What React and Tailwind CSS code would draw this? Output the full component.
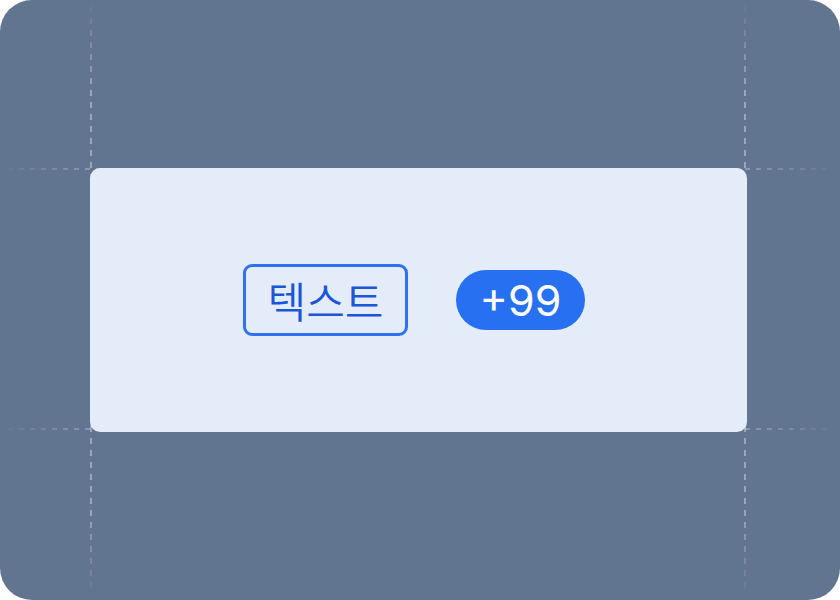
import React from "react";

function Guides() {
  return (
    <svg className="absolute left-0 top-0 pointer-events-none" width="840" height="600" viewBox="0 0 840 600">
      <defs>
        <linearGradient id="gh" gradientUnits="userSpaceOnUse" x1="0" y1="0" x2="840" y2="0">
          <stop offset="0" stopColor="#fff" stopOpacity="0" />
          <stop offset="0.15" stopColor="#fff" stopOpacity="0.36" />
          <stop offset="0.85" stopColor="#fff" stopOpacity="0.36" />
          <stop offset="1" stopColor="#fff" stopOpacity="0" />
        </linearGradient>
        <linearGradient id="gv" gradientUnits="userSpaceOnUse" x1="0" y1="0" x2="0" y2="600">
          <stop offset="0" stopColor="#fff" stopOpacity="0" />
          <stop offset="0.15" stopColor="#fff" stopOpacity="0.36" />
          <stop offset="0.85" stopColor="#fff" stopOpacity="0.36" />
          <stop offset="1" stopColor="#fff" stopOpacity="0" />
        </linearGradient>
      </defs>
      <line x1="8" y1="169" x2="832" y2="169" stroke="url(#gh)" strokeWidth="2" strokeDasharray="5 6" />
      <line x1="8" y1="429" x2="832" y2="429" stroke="url(#gh)" strokeWidth="2" strokeDasharray="5 6" />
      <line x1="91" y1="6" x2="91" y2="594" stroke="url(#gv)" strokeWidth="2" strokeDasharray="6 6" />
      <line x1="745" y1="6" x2="745" y2="594" stroke="url(#gv)" strokeWidth="2" strokeDasharray="6 6" />
    </svg>
  );
}

export default function App() {
  return (
    <div className="w-[840px] h-[600px] bg-white">
      <div className="relative w-[840px] h-[600px] rounded-[32px] bg-[#627590] overflow-hidden pl-[90px] pt-[168px]">
        <Guides />
        <div className="relative w-[657px] h-[264px] rounded-[10px] bg-[#e4ecf9] flex items-center justify-center gap-[48px] pr-[9px]">
          <div
            className="w-[165px] h-[72px] rounded-[9px] border-[3px] border-[#2f72f0] flex items-center justify-center text-[#1a56d6] text-[42px] leading-none"
            style={{ fontFamily: '"Noto Sans CJK KR", "Noto Sans", sans-serif', fontWeight: 350 }}
          >
            텍스트
          </div>
          <div
            className="w-[129px] h-[60px] rounded-full bg-[#2870f2] flex items-center justify-center text-white text-[43px] font-normal leading-none"
            style={{ fontFamily: 'Inter, "Noto Sans", sans-serif' }}
          >
            +99
          </div>
        </div>
      </div>
    </div>
  );
}
